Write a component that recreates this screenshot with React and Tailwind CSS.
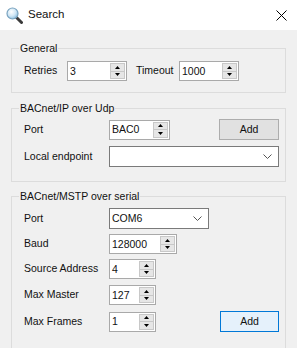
import React from 'react';

function SearchIcon() {
    return (
        <svg width="17" height="17" viewBox="0 0 17 17">
            <defs>
                <radialGradient id="lens" cx="40%" cy="35%" r="65%">
                    <stop offset="0%" stopColor="#ffffff" />
                    <stop offset="60%" stopColor="#cfe6f5" />
                    <stop offset="100%" stopColor="#8fc0e0" />
                </radialGradient>
            </defs>
            <line x1="10.5" y1="10.5" x2="15.5" y2="15.5" stroke="#3a3a3a" strokeWidth="3" strokeLinecap="round" />
            <circle cx="6.5" cy="6.5" r="5.5" fill="url(#lens)" stroke="#7aa3bf" strokeWidth="1.2" />
        </svg>
    );
}

function Spinner() {
    return (
        <div className="flex flex-col w-[15px] h-[16px] mr-[1px] border border-[#c8c8c8] bg-[#e6e6e6]">
            <div className="flex-1 flex items-center justify-center border-b border-[#c8c8c8]">
                <svg width="5" height="3" viewBox="0 0 5 3"><path d="M0 3 L2.5 0 L5 3 Z" fill="#000" /></svg>
            </div>
            <div className="flex-1 flex items-center justify-center">
                <svg width="5" height="3" viewBox="0 0 5 3"><path d="M0 0 L2.5 3 L5 0 Z" fill="#000" /></svg>
            </div>
        </div>
    );
}

function NumBox({ value, w }) {
    return (
        <div className={`flex items-center h-[20px] bg-white border border-[#a9a9a9] ${w}`}>
            <span className="flex-1 pl-[2px] leading-none">{value}</span>
            <Spinner />
        </div>
    );
}

function Combo({ value, w }) {
    return (
        <div className={`flex items-center h-[21px] bg-white border border-[#7a7a7a] ${w}`}>
            <span className="flex-1 pl-[2px] leading-none">{value}</span>
            <svg width="9" height="5" viewBox="0 0 9 5" className="mr-[6px]">
                <path d="M0.5 0.5 L4.5 4.5 L8.5 0.5" fill="none" stroke="#555" strokeWidth="1" />
            </svg>
        </div>
    );
}

function Group({ title, className, children }) {
    return (
        <fieldset className={`mx-[11px] border border-[#dcdcdc] ${className}`}>
            <legend className="ml-[7px] px-[1px] leading-[14px]">{title}</legend>
            {children}
        </fieldset>
    );
}

export default function App() {
    return (
        <div className="w-[297px] h-[348px] bg-[#f0f0f0] text-[#111] text-[10.5px] font-['Liberation_Sans',Arial,sans-serif] overflow-hidden">
            {/* title bar */}
            <div className="h-[30px] bg-white flex items-center">
                <div className="ml-[6px] mt-[1px]"><SearchIcon /></div>
                <span className="ml-[5px] text-[11.5px]">Search</span>
                <svg width="11" height="11" viewBox="0 0 11 11" className="ml-auto mr-[10px]">
                    <path d="M0.5 0.5 L10.5 10.5 M10.5 0.5 L0.5 10.5" stroke="#000" strokeWidth="1" />
                </svg>
            </div>

            {/* General */}
            <Group title="General" className="mt-[11px]">
                <div className="flex items-center pl-[12px] pt-[6px] pb-[11px]">
                    <span className="w-[43px]">Retries</span>
                    <NumBox value="3" w="w-[60px]" />
                    <span className="w-[43px] ml-[9px]">Timeout</span>
                    <NumBox value="1000" w="w-[60px]" />
                </div>
            </Group>

            {/* BACnet/IP */}
            <Group title="BACnet/IP over Udp" className="mt-[8px]">
                <div className="flex flex-col pl-[12px] pr-[6px] pt-[4px] pb-[14px]">
                    <div className="flex items-center h-[21px]">
                        <span className="w-[85px]">Port</span>
                        <NumBox value="BAC0" w="w-[61px]" />
                        <button className="ml-auto w-[60px] h-[21px] bg-[#e1e1e1] border border-[#adadad]">Add</button>
                    </div>
                    <div className="flex items-center mt-[6px]">
                        <span className="w-[85px]">Local endpoint</span>
                        <Combo value="" w="w-[170px]" />
                    </div>
                </div>
            </Group>

            {/* BACnet/MSTP */}
            <Group title="BACnet/MSTP over serial" className="mt-[7px]">
                <div className="flex flex-col gap-[5px] pl-[12px] pr-[6px] pt-[5px] pb-[17px]">
                    <div className="flex items-center">
                        <span className="w-[85px]">Port</span>
                        <Combo value="COM6" w="w-[100px]" />
                    </div>
                    <div className="flex items-center">
                        <span className="w-[85px]">Baud</span>
                        <NumBox value="128000" w="w-[68px]" />
                    </div>
                    <div className="flex items-center">
                        <span className="w-[85px]">Source Address</span>
                        <NumBox value="4" w="w-[47px]" />
                    </div>
                    <div className="flex items-center mt-[1px]">
                        <span className="w-[85px]">Max Master</span>
                        <NumBox value="127" w="w-[47px]" />
                    </div>
                    <div className="flex items-center mt-[1px]">
                        <span className="w-[85px]">Max Frames</span>
                        <NumBox value="1" w="w-[47px]" />
                        <button className="ml-auto w-[59px] h-[21px] bg-[#e5f1fb] border border-[#0078d7]">Add</button>
                    </div>
                </div>
            </Group>
        </div>
    );
}
